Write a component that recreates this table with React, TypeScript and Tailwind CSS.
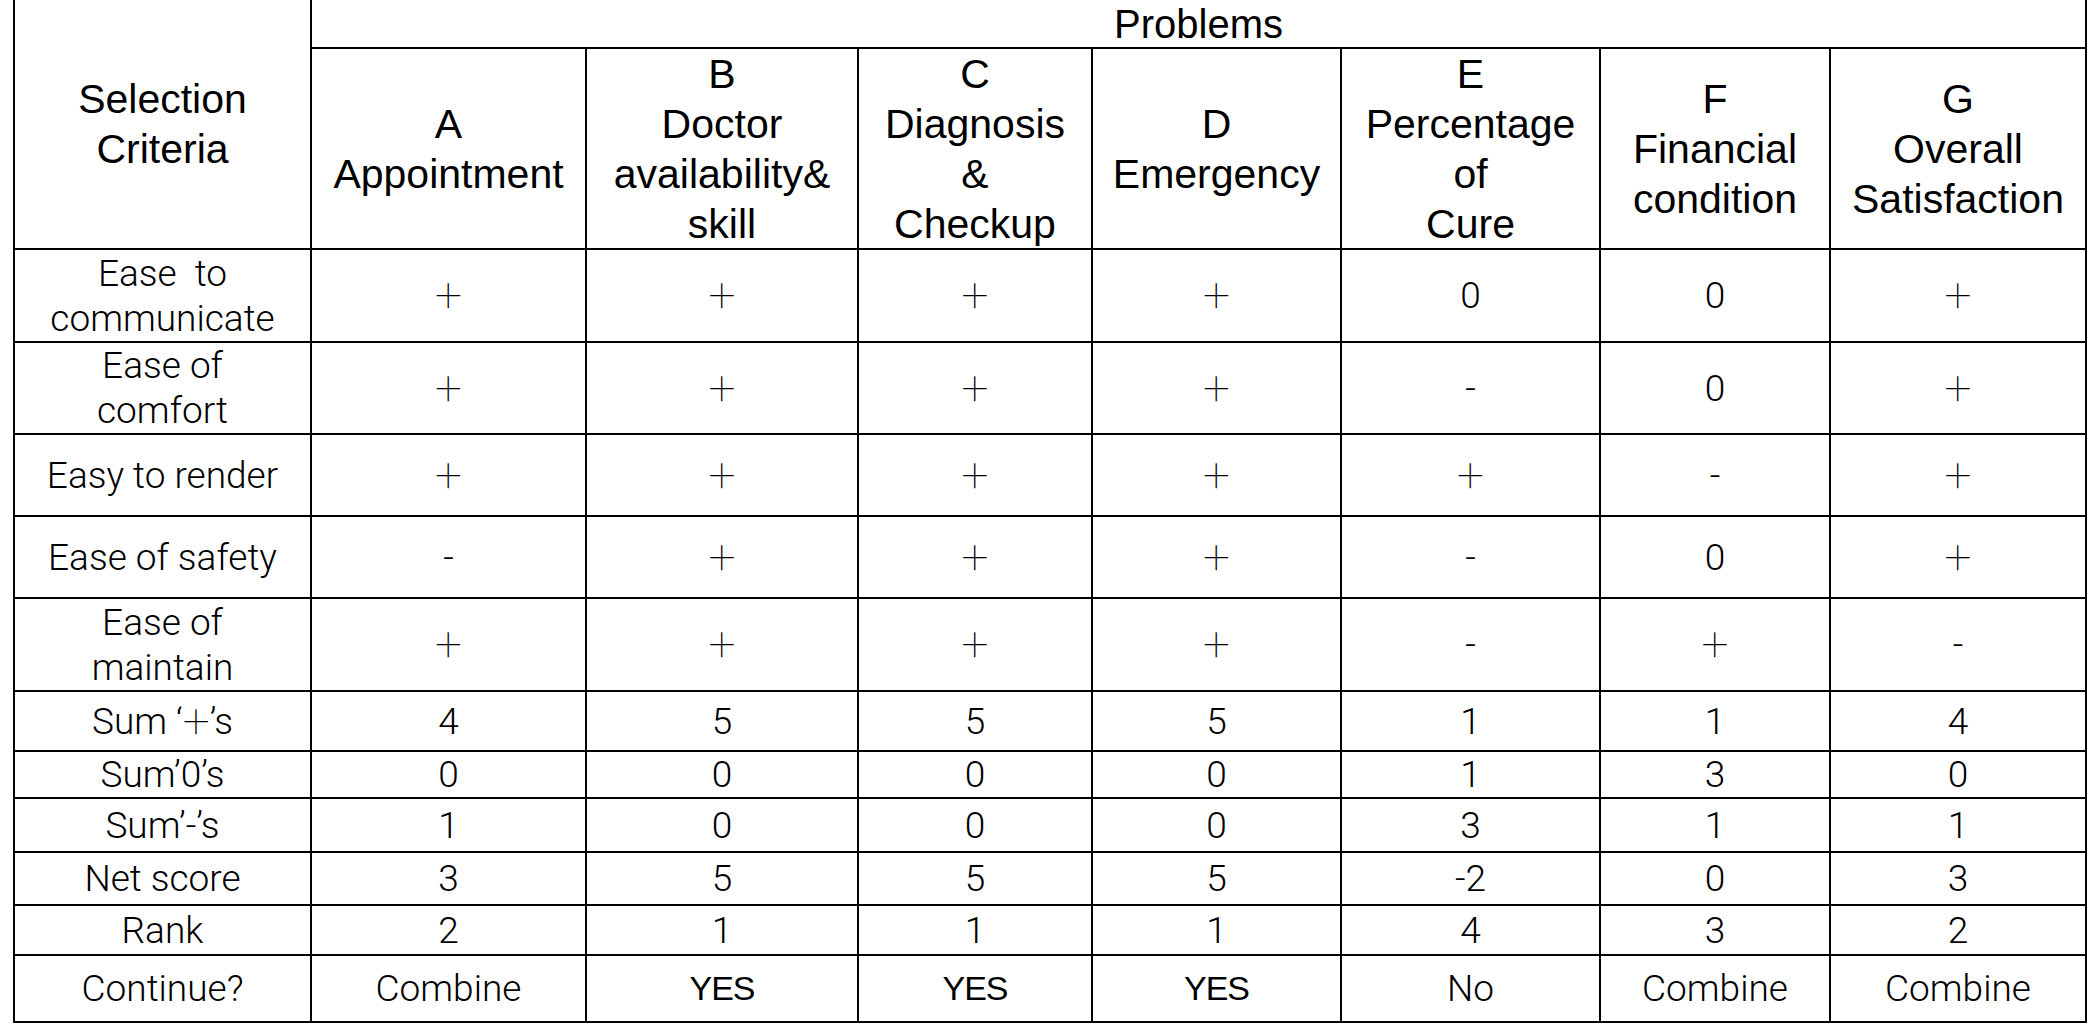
import React from "react";

type Cell = string;

const headers: string[][] = [
  ["A", "Appointment"],
  ["B", "Doctor", "availability&", "skill"],
  ["C", "Diagnosis", "&", "Checkup"],
  ["D", "Emergency"],
  ["E", "Percentage", "of", "Cure"],
  ["F", "Financial", "condition"],
  ["G", "Overall", "Satisfaction"],
];

const rows: { label: string[]; values: Cell[] }[] = [
  { label: ["Ease\u00a0 to", "communicate"], values: ["+", "+", "+", "+", "0", "0", "+"] },
  { label: ["Ease of", "comfort"], values: ["+", "+", "+", "+", "-", "0", "+"] },
  { label: ["Easy to render"], values: ["+", "+", "+", "+", "+", "-", "+"] },
  { label: ["Ease of safety"], values: ["-", "+", "+", "+", "-", "0", "+"] },
  { label: ["Ease of", "maintain"], values: ["+", "+", "+", "+", "-", "+", "-"] },
  { label: ["SUMPLUS"], values: ["4", "5", "5", "5", "1", "1", "4"] },
  { label: ["Sum\u20190\u2019s"], values: ["0", "0", "0", "0", "1", "3", "0"] },
  { label: ["Sum\u2019-\u2019s"], values: ["1", "0", "0", "0", "3", "1", "1"] },
  { label: ["Net score"], values: ["3", "5", "5", "5", "-2", "0", "3"] },
  { label: ["Rank"], values: ["2", "1", "1", "1", "4", "3", "2"] },
  { label: ["Continue?"], values: ["Combine", "YES", "YES", "YES", "No", "Combine", "Combine"] },
];

const cellBase =
  "flex flex-col items-center justify-center text-center border-r-2 border-b-2 border-black text-black";
const headFont = "font-['Liberation_Sans',Arial,sans-serif] text-[41px] leading-[50px]";
const bodyFont = "font-['Roboto',sans-serif] font-light text-[37px] leading-[45px]";
const yesFont = "font-['Liberation_Sans',Arial,sans-serif] text-[34px] leading-[45px] tracking-[-1px]";
const plusFont = "font-['Roboto',sans-serif] font-thin text-[48px] leading-[45px]";

function Plus() {
  return <span className={plusFont}>+</span>;
}

export default function App() {
  return (
    <div className="w-[2088px] h-[1028px] bg-white overflow-hidden">
      <div className="ml-[13px] w-max grid border-l-2 border-black grid-cols-[297px_275px_272px_234px_249px_259px_230px_256px] grid-rows-[49px_201px_93px_92px_82px_82px_93px_60px_47px_54px_53px_50px_67px]">
        <div className={`${cellBase} ${headFont} row-span-2`}>
          <span>Selection</span>
          <span>Criteria</span>
        </div>
        <div className={`${cellBase} col-span-7 font-['Liberation_Sans',Arial,sans-serif] text-[40px] leading-[46px]`}>
          Problems
        </div>
        {headers.map((lines, i) => (
          <div key={`h${i}`} className={`${cellBase} ${headFont}`}>
            {lines.map((l, j) => (
              <span key={j} className="whitespace-nowrap">
                {l}
              </span>
            ))}
          </div>
        ))}
        {rows.map((r, ri) => (
          <React.Fragment key={`r${ri}`}>
            <div className={`${cellBase} ${bodyFont}`}>
              {r.label.map((l, j) =>
                l === "SUMPLUS" ? (
                  <span key={j} className="whitespace-pre flex items-center">
                    Sum {"\u2018"}
                    <Plus />
                    {"\u2019"}s
                  </span>
                ) : (
                  <span key={j} className="whitespace-pre">
                    {l}
                  </span>
                )
              )}
            </div>
            {r.values.map((v, vi) => (
              <div key={`c${ri}-${vi}`} className={`${cellBase} ${v === "YES" ? yesFont : bodyFont}`}>
                {v === "+" ? <Plus /> : v}
              </div>
            ))}
          </React.Fragment>
        ))}
      </div>
    </div>
  );
}
